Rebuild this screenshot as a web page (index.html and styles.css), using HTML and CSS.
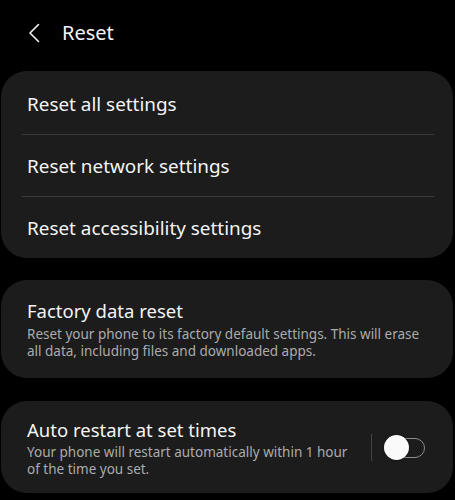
FILE: index.html
```html
<!DOCTYPE html>
<html lang="en">
<head>
<meta charset="utf-8">
<title>Reset</title>
<link rel="stylesheet" href="styles.css">
</head>
<body>
<div class="screen">
  <header class="header">
    <svg class="back" width="12" height="20" viewBox="0 0 12 20" aria-hidden="true">
      <path d="M10.5 1.5 L2 10 L10.5 18.5" fill="none" stroke="#f2f2f2" stroke-width="1.6" stroke-linecap="round" stroke-linejoin="round"/>
    </svg>
    <h1 class="title">Reset</h1>
  </header>

  <section class="card list">
    <div class="row">Reset all settings</div>
    <div class="divider"></div>
    <div class="row">Reset network settings</div>
    <div class="divider"></div>
    <div class="row">Reset accessibility settings</div>
  </section>

  <section class="card item factory">
    <div class="item-title">Factory data reset</div>
    <div class="item-sub">Reset your phone to its factory default settings. This will erase all data, including files and downloaded apps.</div>
  </section>

  <section class="card item auto">
    <div class="item-text">
      <div class="item-title">Auto restart at set times</div>
      <div class="item-sub">Your phone will restart automatically within 1 hour of the time you set.</div>
    </div>
    <div class="vsep"></div>
    <div class="switch"><div class="thumb"></div></div>
  </section>
</div>
</body>
</html>
```

FILE: styles.css
```css
html, body {
  margin: 0;
  padding: 0;
  background: #000;
}
body {
  font-family: "Noto Sans", "Open Sans", "Liberation Sans", sans-serif;
  color: #f4f4f4;
  width: 455px;
  height: 500px;
  overflow: hidden;
}
.screen {
  display: flex;
  flex-direction: column;
}
.header {
  height: 66px;
  display: flex;
  align-items: center;
  padding-left: 28px;
  margin-bottom: 5px;
}
.back {
  display: block;
  margin-right: 22px;
}
.title {
  margin: 0;
  font-size: 20px;
  line-height: 24px;
  font-weight: 400;
  color: #f4f4f4;
}
.card {
  background: #1c1c1c;
  border-radius: 26px;
  margin: 0 2px 0 1px;
}
.list {
  display: flex;
  flex-direction: column;
  padding-top: 2px;
}
.row {
  height: 61px;
  display: flex;
  align-items: center;
  padding-left: 26px;
  font-size: 18.9px;
}
.divider {
  height: 1px;
  background: #3a3a3a;
  margin: 0 19px 0 21px;
}
.item {
  padding: 19px 28px 18px 26px;
}
.factory {
  margin-top: 22px;
}
.item-title {
  font-size: 18.5px;
  line-height: 24px;
}
.item-sub {
  margin-top: 3px;
  font-size: 13.5px;
  line-height: 17px;
  color: #ababab;
}
.auto {
  margin-top: 23px;
  display: flex;
  align-items: center;
  padding-top: 17px;
  padding-bottom: 16px;
}
.auto .item-sub {
  margin-top: 2px;
  line-height: 16.5px;
}
.item-text {
  flex: 1;
  padding-right: 12px;
}
.vsep {
  width: 1px;
  height: 27px;
  background: #444;
  margin-right: 12px;
}
.switch {
  position: relative;
  width: 39px;
  height: 18px;
  border: 1.5px solid #8c8c8c;
  border-radius: 12px;
}
.thumb {
  position: absolute;
  left: -1.5px;
  top: 50%;
  width: 25px;
  height: 25px;
  margin-top: -12.5px;
  border-radius: 50%;
  background: #fafafa;
  box-shadow: 0 0 2px rgba(0,0,0,0.6);
}
```
